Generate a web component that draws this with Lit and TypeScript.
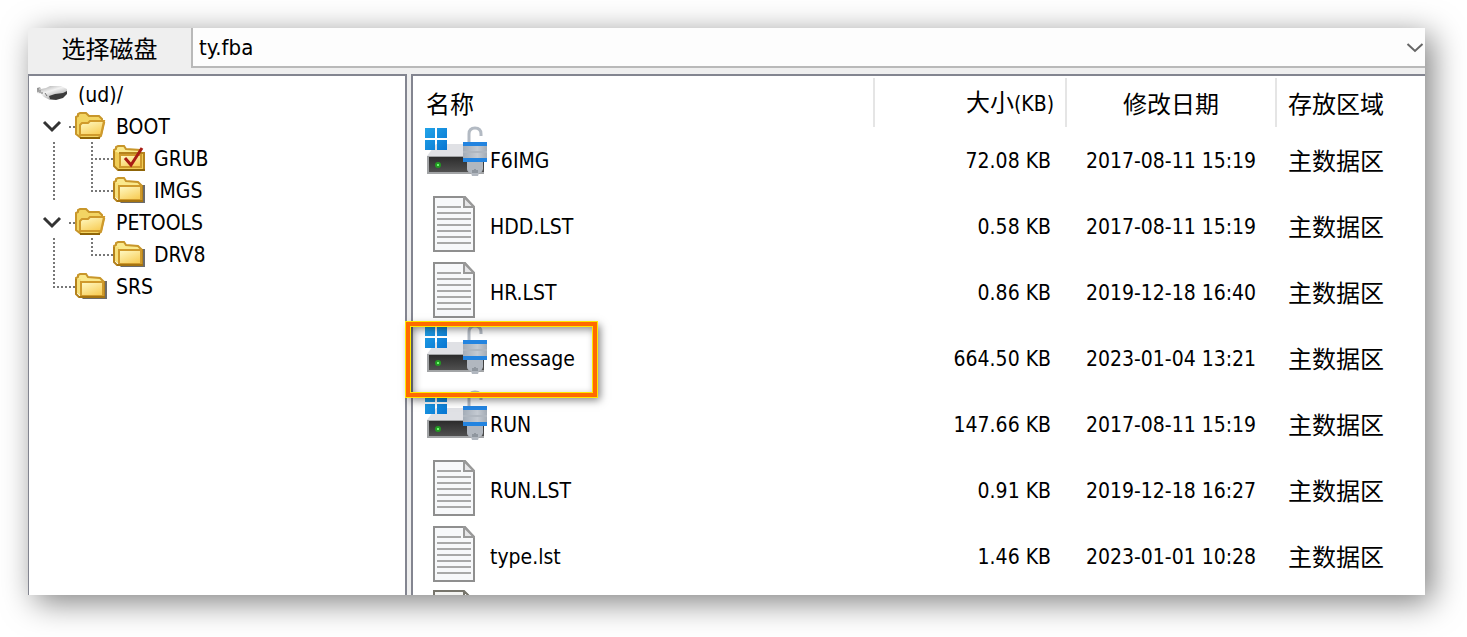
import { LitElement, html, css, svg, nothing } from "lit";
import { customElement } from "lit/decorators.js";

type Node = { name: string; icon: "drive" | "open" | "closed" | "checked"; depth: number; guides: string; toggle?: boolean };
type FileRow = { name: string; kind: "image" | "text" | "plain"; size: string; date: string; area: string; marked?: boolean };

const NODES: Node[] = [
  { name: "(ud)/", icon: "drive", depth: 0, guides: "" },
  { name: "BOOT", icon: "open", depth: 1, guides: "M32 17H38", toggle: true },
  { name: "GRUB", icon: "checked", depth: 2, guides: "M17 0V32M55 0V32M58 17H76" },
  { name: "IMGS", icon: "closed", depth: 2, guides: "M17 0V28M55 0V18M58 17H76" },
  { name: "PETOOLS", icon: "open", depth: 1, guides: "M32 17H38", toggle: true },
  { name: "DRV8", icon: "closed", depth: 2, guides: "M17 0V32M55 0V18M58 17H76" },
  { name: "SRS", icon: "closed", depth: 1, guides: "M17 0V18M20 17H38" },
];

const MAIN = "主数据区";

const FILES: FileRow[] = [
  { name: "F6IMG", kind: "image", size: "72.08 KB", date: "2017-08-11 15:19", area: MAIN },
  { name: "HDD.LST", kind: "text", size: "0.58 KB", date: "2017-08-11 15:19", area: MAIN },
  { name: "HR.LST", kind: "text", size: "0.86 KB", date: "2019-12-18 16:40", area: MAIN },
  { name: "message", kind: "image", size: "664.50 KB", date: "2023-01-04 13:21", area: MAIN, marked: true },
  { name: "RUN", kind: "image", size: "147.66 KB", date: "2017-08-11 15:19", area: MAIN },
  { name: "RUN.LST", kind: "text", size: "0.91 KB", date: "2019-12-18 16:27", area: MAIN },
  { name: "type.lst", kind: "text", size: "1.46 KB", date: "2023-01-01 10:28", area: MAIN },
  { name: "", kind: "plain", size: "", date: "", area: "" },
];

const driveIcon = html`<svg width="32" height="32" viewBox="0 0 32 32" aria-hidden="true">
  <defs><linearGradient id="d" x1="0" y1="0" x2=".7" y2="1"><stop offset="0" stop-color="#999"/><stop offset=".45" stop-color="#f2f2f2"/><stop offset="1" stop-color="#999"/></linearGradient></defs>
  <path d="M0 10l3-1 1 2 5-1 4-2h11l6 3v3l-5 5-8 3h-4l-6-3-3-3-4-1z" fill="url(#d)"/>
  <path d="M12 18l6-2 8-1 4-2v3l-4 4-7 2-6-1z" fill="#3c3c3c"/>
  <path d="M1 10v4M3 12v3M5 14v2M8 15l2 3" stroke="#777" fill="none"/>
</svg>`;

const grad = svg`<defs><linearGradient id="f" x1="0" y1="0" x2=".6" y2="1"><stop offset="0" stop-color="#fffbc8"/><stop offset="1" stop-color="#f8cf5c"/></linearGradient></defs>`;

const closedFolder = svg`
  <path d="M5 26h24V11h3v18H8z" fill="#6b6b6b"/>
  <path d="M1 8l2-1V5l2-1h6l2 3 12 1 4 4v3H1z" fill="#fae98c" stroke="#c8962a" stroke-width="2"/>
  <path d="M1 9v15l3 3H29V12H5" fill="none" stroke="#b5821c" stroke-width="2"/>
  <path d="M2 9h4v17l-4-3z" fill="#f7e07a"/>
  <path d="M6 12h22v14H6z" fill="url(#f)" stroke="#cf9a2c" stroke-width="2"/>
  <path d="M4 27h26" stroke="#a67410" stroke-width="2"/>`;

const checkedFolder = svg`
  <path d="M1 8l2-1V5l2-1h6l2 3 14 1v4H1z" fill="#fae98c" stroke="#c8962a" stroke-width="2"/>
  <path d="M1 9v15l4 4H31V11H6" fill="#f0cc55" stroke="#b5821c" stroke-width="2"/>
  <path d="M7 13h21v12H7z" fill="url(#f)" stroke="#cf9a2c" stroke-width="2"/>
  <path d="M5 28h27" stroke="#8f6508" stroke-width="2"/>
  <path d="M12 16l6 7L29 6" fill="none" stroke="#a81c14" stroke-width="3"/>`;

const openFolder = svg`
  <path d="M1 7l2-1V4l2-1h6l3 3h10l3 3v4h2l-3 13-3 2H6l-5-4z" fill="#f3d563" stroke="#c8962a" stroke-width="2"/>
  <path d="M5 15l2-2h6l2-2h14l-3 14H5z" fill="url(#f)" stroke="#cf9a2c" stroke-width="2"/>
  <path d="M5 28h20" stroke="#8f6508" stroke-width="2"/>`;

const folder = (icon: Node["icon"]) => html`<svg width="32" height="32" viewBox="0 0 32 32" aria-hidden="true">
  ${grad}${icon === "open" ? openFolder : icon === "checked" ? checkedFolder : closedFolder}
</svg>`;

const lockedDisk = html`<svg class="disk" width="64" height="52" viewBox="0 1 64 52" aria-hidden="true">
  <defs>
    <linearGradient id="w" x1="0" y1="0" x2="1" y2="1"><stop offset="0" stop-color="#22a4e8"/><stop offset="1" stop-color="#0876d2"/></linearGradient>
    <linearGradient id="k" x1="0" y1="0" x2="0" y2="1"><stop offset="0" stop-color="#2c2c2c"/><stop offset="1" stop-color="#505050"/></linearGradient>
    <linearGradient id="l" x1="0" y1="0" x2="1" y2="0"><stop offset="0" stop-color="#a4adb8"/><stop offset=".6" stop-color="#c4cad2"/><stop offset="1" stop-color="#a4acb6"/></linearGradient>
  </defs>
  <path d="M2 30 11 18H50l9 12z" fill="#e0e1e5"/>
  <path d="M2 30h57v18H2z" fill="#a2a4a6"/>
  <path d="M4 31h55v15H4z" fill="url(#k)"/>
  <circle cx="13" cy="39" r="3" fill="#239a23"/><path d="M12 38h2v2h-2z" fill="#6dfa6d"/>
  <path d="M0 2h10v10H0zM12 2h10v10H12zM0 14h10v10H0zM12 14h10v10H12z" fill="url(#w)"/>
  <path d="M44 17V8q0-6 6-6t6 6v2" fill="none" stroke="#b3bac3" stroke-width="3"/>
  <path d="M42 35h16v8q-1 4-4 4l-1 3h-6l-1-3q-4-1-4-4z" fill="#b1b7bf"/><path d="M47 47v-3h2v-1h2v1h2v3z" fill="#8f969e"/>
  <path d="M38 16h24v20H38z" fill="url(#l)"/>
  <path d="M38 26h24" stroke="#b0b7c0" stroke-width="2"/>
  <path d="M38 16h24v4H38zM38 32h24v4H38z" fill="#2384e0"/>
</svg>`;

const sheet = html`<svg class="sheet" width="42" height="56" viewBox="0 0 42 56" aria-hidden="true">
  <path d="M1 1h31l9 10v44H1z" fill="#f7f8fa" stroke="#8f8f8f" stroke-width="2"/>
  <path d="M31 1v10h10z" fill="#e6e6e8" stroke="#999" stroke-width="2"/>
  <path d="M4 11h24M4 17h34M4 23h34M4 29h34M4 35h34M4 41h34M4 47h34" stroke="#a8a8a8" stroke-width="2"/>
</svg>`;

const plainSheet = html`<svg class="sheet plain" width="42" height="56" viewBox="0 0 42 56" aria-hidden="true">
  <path d="M1 1h29l11 10v44H1z" fill="#f4f4f2" stroke="#77756c" stroke-width="2"/>
  <path d="M31 1v10h10z" fill="#fff" stroke="#77756c" stroke-width="2"/>
</svg>`;

const PICTURES = { image: lockedDisk, text: sheet, plain: plainSheet };

@customElement("app-root")
export class AppRoot extends LitElement {
  static styles = css`
    :host {
      display: block; box-sizing: border-box; height: 100vh; padding: 28px 42px 42px 28px; overflow: hidden;
      background: #fff; color: #000;
      font: 21px/32px "DejaVu Sans Condensed", "Noto Sans", "Noto Sans CJK SC", sans-serif;
    }
    .window { display: flex; flex-direction: column; height: 100%; overflow: hidden; background: #efefef; box-shadow: 7px 7px 30px rgba(0, 0, 0, 0.5); }
    .bar { display: flex; flex: none; height: 40px; margin-bottom: 6px; }
    .pick { width: 163px; padding: 0; border: 0; background: none; color: inherit; font: 24px/40px "Noto Sans CJK SC", sans-serif; }
    .combo { display: flex; flex: 1; align-items: center; border: solid #b9b9b9; border-width: 0 0 2px 2px; background: #fdfdfd; }
    .combo select { flex: 1; min-width: 0; height: 38px; padding: 2px 6px 0; border: 0; background: none; color: inherit; font: inherit; font-size: 22px; appearance: none; }
    .combo svg { flex: none; margin-right: 1px; }
    .panes { display: grid; grid-template-columns: 379px minmax(0, 1fr); gap: 4px; flex: 1; min-height: 0; }
    .tree { margin: 0; padding: 2px 0 0 8px; list-style: none; border: solid #838590; border-width: 2px 2px 0 1px; background: #fff; }
    .node { display: flex; height: 32px; align-items: center; white-space: nowrap; }
    .node svg { display: block; flex: none; }
    .label { margin-left: 9px; padding-top: 2px; }
    .fold { width: 38px; height: 32px; padding: 0; border: 0; background: none; }
    .list { min-height: 0; padding-top: 2px; border: solid #838590; border-width: 2px 0 0 2px; background: #fff; }
    table { width: 100%; border-spacing: 0; table-layout: fixed; }
    .size { width: 192px; }
    .date { width: 210px; }
    .area { width: 148px; }
    th { box-sizing: border-box; height: 49px; padding: 0 11px; border-right: 2px solid #e5e5e5; font: 24px/32px "Noto Sans CJK SC", sans-serif; text-align: left; white-space: nowrap; }
    th:first-child { padding-left: 13px; }
    th:last-child { border: 0; }
    .size { text-align: right; }
    .date { text-align: center; }
    .unit { font: 21px/32px "DejaVu Sans Condensed", "Noto Sans", sans-serif; }
    td { box-sizing: border-box; height: 66px; padding: 0 0 0 12px; white-space: nowrap; }
    td:nth-child(2) { padding: 2px 16px 0 0; text-align: right; }
    td:nth-child(3) { padding: 2px 2px 0 0; text-align: center; }
    td:nth-child(4) { padding: 0 11px; font: 24px/32px "Noto Sans CJK SC", sans-serif; }
    .file { position: relative; display: flex; height: 66px; align-items: center; }
    .name { padding: 2px 0 0 1px; }
    .pic { display: flex; flex: none; align-items: flex-start; width: 64px; height: 66px; }
    .disk { overflow: visible; }
    .sheet { margin: 3px 0 0 8px; }
    .plain { margin-top: 1px; }
    .frame {
      position: absolute; z-index: 1; left: -19px; top: -3px; box-sizing: border-box; width: 191px; height: 75px;
      border: 4px solid #ff6a00; outline: 1px solid #ffe800;
      box-shadow: inset 0 0 0 1px #ffe800, inset 3px 3px 8px rgba(0, 0, 0, 0.5), 3px 3px 8px rgba(0, 0, 0, 0.5);
    }
  `;

  render() {
    return html`<div class="window">
      <div class="bar">
        <button class="pick" type="button" id="pick">选择磁盘</button>
        <div class="combo">
          <select aria-labelledby="pick"><option>ty.fba</option></select>
          <svg width="18" height="12" viewBox="0 0 18 12" aria-hidden="true"><path d="M1.500 3l7.500 7L16.500 3" fill="none" stroke="#666" stroke-width="2"/></svg>
        </div>
      </div>
      <div class="panes">
        <ul class="tree">${NODES.map((n) => this.node(n))}</ul>
        <div class="list">
          <table>
            <thead><tr><th>名称</th><th class="size">大小<span class="unit">(KB)</span></th><th class="date">修改日期</th><th class="area">存放区域</th></tr></thead>
            <tbody>${FILES.map((f) => this.file(f))}</tbody>
          </table>
        </div>
      </div>
    </div>`;
  }

  private node(n: Node) {
    const w = n.depth * 38;
    const lines = svg`<path d=${n.guides} fill="none" stroke="#777" stroke-width="2" stroke-dasharray="2 2"/>`;
    return html`<li class="node">
      ${n.toggle
        ? html`<button class="fold" type="button" aria-expanded="true" aria-label=${n.name}><svg width="38" height="32"><path d="M7 12l8 8 8-8" fill="none" stroke="#333" stroke-width="3"/>${lines}</svg></button>`
        : w ? html`<svg width=${w} height="32" aria-hidden="true">${lines}</svg>` : nothing}
      ${n.icon === "drive" ? driveIcon : folder(n.icon)}
      <span class="label">${n.name}</span>
    </li>`;
  }

  private file(f: FileRow) {
    return html`<tr>
      <td><div class="file"><span class="pic">${PICTURES[f.kind]}</span><span class="name">${f.name}</span>${f.marked ? html`<span class="frame"></span>` : nothing}</div></td>
      <td>${f.size}</td><td>${f.date}</td><td>${f.area}</td>
    </tr>`;
  }
}
